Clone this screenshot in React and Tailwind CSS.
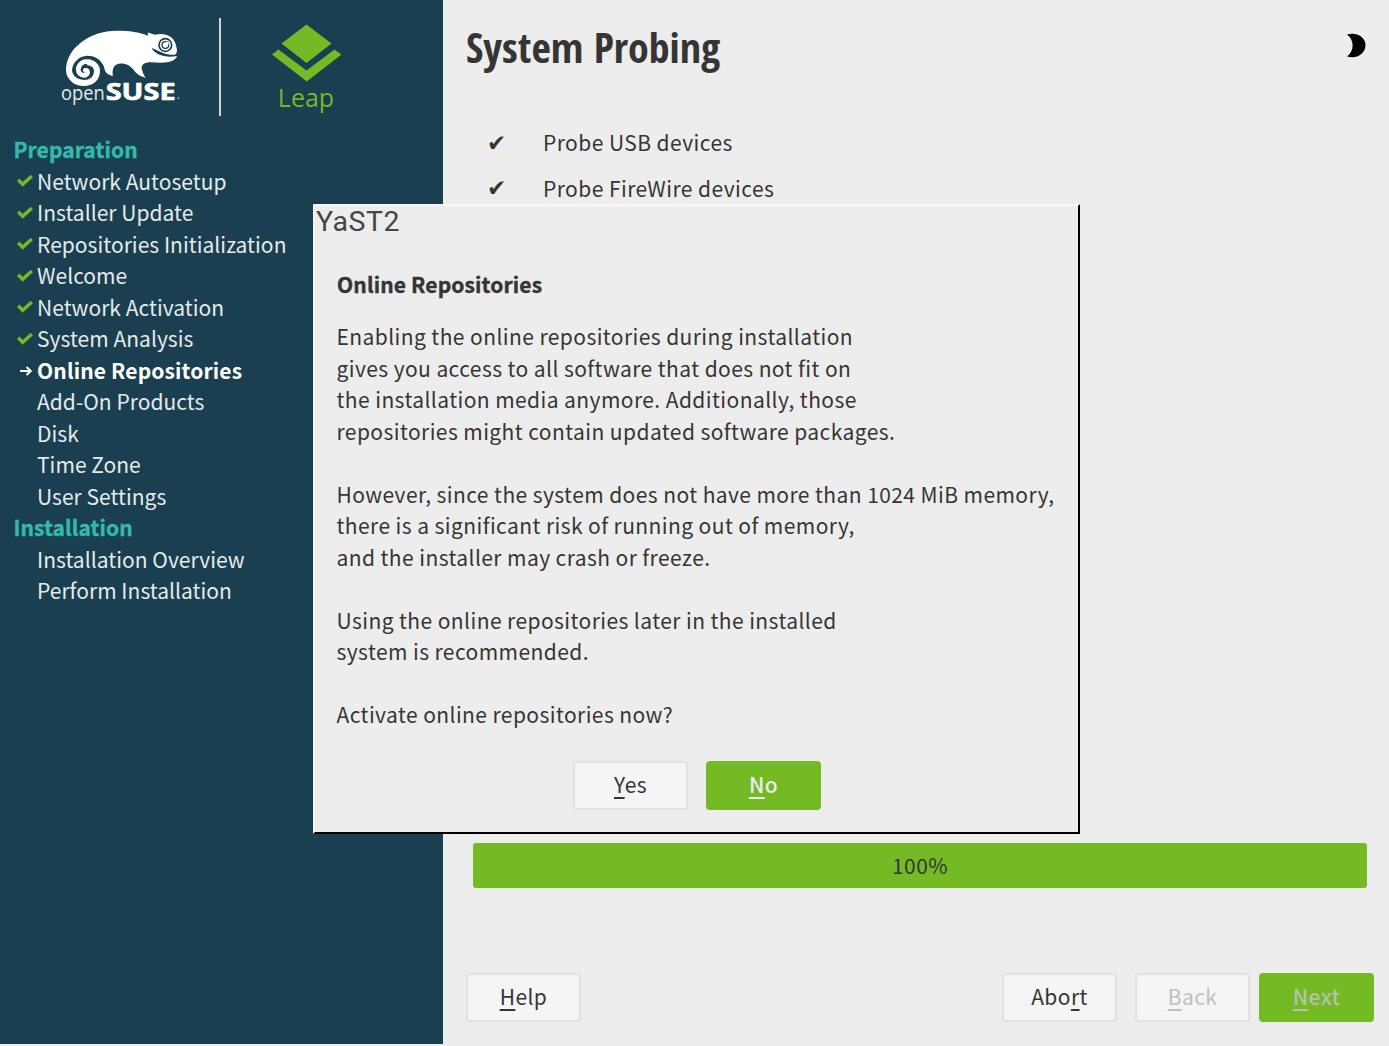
const steps = [
  { title: "Preparation" },
  { label: "Network Autosetup", state: "done" },
  { label: "Installer Update", state: "done" },
  { label: "Repositories Initialization", state: "done" },
  { label: "Welcome", state: "done" },
  { label: "Network Activation", state: "done" },
  { label: "System Analysis", state: "done" },
  { label: "Online Repositories", state: "current" },
  { label: "Add-On Products" },
  { label: "Disk" },
  { label: "Time Zone" },
  { label: "User Settings" },
  { title: "Installation" },
  { label: "Installation Overview" },
  { label: "Perform Installation" },
];

const message = [
  "Enabling the online repositories during installation",
  "gives you access to all software that does not fit on",
  "the installation media anymore. Additionally, those",
  "repositories might contain updated software packages.",
  "",
  "However, since the system does not have more than 1024 MiB memory,",
  "there is a significant risk of running out of memory,",
  "and the installer may crash or freeze.",
  "",
  "Using the online repositories later in the installed",
  "system is recommended.",
  "",
  "Activate online repositories now?",
];

function OpenSuseLogo() {
  return (
    <svg className="h-[105px] w-[140px] shrink-0" viewBox="0 0 420 315">
      <path
        fill="#fff"
        d="M48 182C47 148 66 118 92 98C122 74 160 62 200 62C238 62 268 66 294 77L293 68C300 67 308 73 316 74C334 70 354 73 366 84C375 92 379 106 381 120C381 128 378 133 374 134C362 136 342 132 318 119L305 114C308 124 326 136 346 139C358 141 370 140 381 138C378 148 366 155 350 157C326 160 306 155 290 158C276 161 272 170 277 182C279 190 284 199 287 203C276 201 266 196 258 188C248 176 240 164 222 161C206 158 196 164 192 170C187 178 187 190 189 198C180 197 172 192 167 186C162 178 164 172 158 163C150 147 132 137 112 137C86 138 67 158 66 182Z"
      />
      <path
        fill="none"
        stroke="#fff"
        strokeWidth="18"
        d="M57 180C58 203 78 219 101 219C125 219 141 204 141 184C141 168 129 158 112 157"
      />
      <path
        fill="none"
        stroke="#fff"
        strokeWidth="14"
        strokeLinecap="round"
        d="M116 156C98 151 84 165 85 180C87 195 103 200 111 192C115 186 112 180 106 181"
      />
      <circle cx="346" cy="105" r="19" fill="#fff" stroke="#193f50" strokeWidth="5" />
      <circle cx="346" cy="105" r="10" fill="none" stroke="#193f50" strokeWidth="4" />
      <circle cx="351" cy="101" r="5" fill="#fff" />
      <text x="33" y="270" fill="#e8ecee" fontFamily="Open Sans" fontSize="62" textLength="131" lengthAdjust="spacingAndGlyphs">open</text>
      <text x="167" y="271" fill="#fff" stroke="#fff" strokeWidth="2" fontFamily="Open Sans" fontWeight="700" fontSize="72" textLength="210" lengthAdjust="spacingAndGlyphs">SUSE</text>
      <circle cx="385" cy="265" r="3" fill="#9fb0b8" />
    </svg>
  );
}

function LeapLogo() {
  return (
    <svg className="h-[60px] w-[70px]" viewBox="0 0 70 60">
      <path fill="#73ba25" d="M34.5 .5L59.500 19.500L34.500 39L9.500 19.500Z" />
      <path fill="#73ba25" d="M0 30.500L6.500 25.500L34.500 46.500L62.500 25.500L69.500 30.500L34.800 57.500Z" />
    </svg>
  );
}

function StepIcon({ state }) {
  if (state === "done")
    return (
      <svg className="h-[14px] w-[16px]" viewBox="0 0 16 14" fill="none" stroke="#73ba25" strokeWidth="3.400">
        <path d="M1.200 5.800L5.700 10.300L14.800 1.900" />
      </svg>
    );
  if (state === "current")
    return (
      <svg className="ml-[2.500px] mt-[1px] h-[12px] w-[13px]" viewBox="0 0 13 12" fill="none" stroke="#fff" strokeWidth="2">
        <path d="M0 6H11M6.500 2L10.800 6L6.500 10" />
      </svg>
    );
  return null;
}

const variants = {
  plain: "bg-[#f5f5f5] border-2 border-[#e1e1e1] text-[#353535]",
  disabled: "bg-[#f5f5f5] border-2 border-[#e1e1e1] text-[#c0c0c0]",
  primary: "bg-[#73ba25] text-[#ededed] font-medium",
  primaryDisabled: "bg-[#73ba25] text-[#b9c2ae] font-medium",
};

function Button({ before = "", hot, after, variant = "plain" }) {
  return (
    <button className={`flex h-[49px] w-[115px] items-center justify-center rounded-[4px] tracking-[0.44px] ${variants[variant]}`}>
      <span>
        {before}
        <span className="underline decoration-2 underline-offset-[4px] [text-decoration-skip-ink:none]">{hot}</span>
        {after}
      </span>
    </button>
  );
}

function Sidebar() {
  return (
    <aside className="h-[1044px] w-[443px] shrink-0 bg-[#193f50] text-[#e6eaec]">
      <header className="flex h-[134px] pl-[50px] pt-[10px]">
        <OpenSuseLogo />
        <div className="ml-[29px] mt-[8px] h-[98px] w-[2px] bg-[#cbd3d7]" />
        <div className="ml-[50.500px] mt-[14px] flex w-[70px] flex-col items-center">
          <LeapLogo />
          <span className="mr-[1px] mt-[-4px] font-['Open_Sans'] text-[25px] leading-[34px] text-[#73ba25]">Leap</span>
        </div>
      </header>
      <ul>
        {steps.map((s) =>
          s.title ? (
            <li
              key={s.title}
              className="h-[31.6px] pl-[13.500px] font-bold leading-[31.5px] tracking-[0.1px] text-[#35b9ab] [-webkit-text-stroke:0.4px_#35b9ab]"
            >
              {s.title}
            </li>
          ) : (
            <li key={s.label} className="flex h-[31.5px] items-center pl-[17px] leading-[31.5px]">
              <span className="w-[20px] shrink-0">
                <StepIcon state={s.state} />
              </span>
              <span className={s.state === "current" ? "font-bold tracking-[0.15px] text-white" : "tracking-[0.03px]"}>{s.label}</span>
            </li>
          )
        )}
      </ul>
    </aside>
  );
}

function Dialog() {
  return (
    <section
      role="dialog"
      className="absolute left-[313px] top-[204px] flex h-[630px] w-[767px] flex-col border-2 border-b-black border-l-[#f6f6f6] border-r-black border-t-[#f8f8f8] bg-[#ededed] tracking-[0.42px]"
    >
      <div className="h-[32px] pl-px font-['Roboto'] text-[28.500px] leading-[32px] tracking-[0.500px] text-[#454545]">YaST2</div>
      <h2 className="ml-[22px] mt-[30px] text-[21px] font-bold leading-[32px] tracking-[0.15px] [-webkit-text-stroke:0.4px_#353535]">
        Online Repositories
      </h2>
      <div className="ml-[21.500px] mt-[21px]">
        {message.map((line, i) => (
          <p key={i} className="h-[31.5px] whitespace-nowrap leading-[31.5px]">
            {line}
          </p>
        ))}
      </div>
      <div className="ml-[258px] mt-[30px] flex gap-[18px]">
        <Button hot="Y" after="es" />
        <Button hot="N" after="o" variant="primary" />
      </div>
    </section>
  );
}

export default function App() {
  return (
    <div className="relative flex h-[1046px] w-[1389px] overflow-hidden bg-[#ededed] font-['Noto_Sans_CJK_SC',sans-serif] text-[21px] text-[#353535]">
      <Sidebar />
      <main className="flex grow flex-col tracking-[0.44px]">
        <div className="flex items-start justify-between pl-[23px] pr-[23px] pt-[16px]">
          <h1 className="font-['Open_Sans_Condensed','Open_Sans'] text-[42px] font-bold leading-[62px] tracking-normal">System Probing</h1>
          <svg className="mt-[16px] h-[26px] w-[20px]" viewBox="0 0 20 26">
            <path d="M1 2.500C12 -.5 19.500 6 19.500 13C19.500 21 12 27.500 1 24.500C8.500 19 8.500 8 1 2.500Z" fill="#000" />
          </svg>
        </div>
        <ul className="mt-[42px] h-[722.500px] pl-[44px]">
          {["Probe USB devices", "Probe FireWire devices"].map((t) => (
            <li key={t} className="flex h-[45.5px] items-center">
              <span className="w-[56px] font-['DejaVu_Sans'] text-[23px]">✔</span>
              {t}
            </li>
          ))}
        </ul>
        <div className="ml-[30px] flex h-[45.500px] w-[894px] items-center justify-center rounded-[3px] bg-[#73ba25]">100%</div>
        <footer className="ml-[23px] mt-[84.500px] flex">
          <Button hot="H" after="elp" />
          <div className="ml-[421px] flex">
            <Button before="Abo" hot="r" after="t" />
            <div className="ml-[18px] mr-[9px]">
              <Button hot="B" after="ack" variant="disabled" />
            </div>
            <Button hot="N" after="ext" variant="primaryDisabled" />
          </div>
        </footer>
      </main>
      <Dialog />
    </div>
  );
}
